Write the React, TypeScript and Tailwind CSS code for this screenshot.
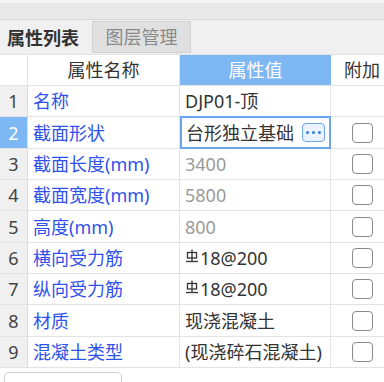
import React from "react";

type Row = {
  n: number;
  name: string;
  value: string;
  gray?: boolean;
  rebar?: boolean;
  check: boolean;
  h: string;
  selected?: boolean;
};

const rows: Row[] = [
  { n: 1, name: "名称", value: "DJP01-顶", check: false, h: "h-[31px]" },
  { n: 2, name: "截面形状", value: "台形独立基础", check: true, h: "h-[32px]", selected: true },
  { n: 3, name: "截面长度(mm)", value: "3400", gray: true, check: true, h: "h-[31px]" },
  { n: 4, name: "截面宽度(mm)", value: "5800", gray: true, check: true, h: "h-[31px]" },
  { n: 5, name: "高度(mm)", value: "800", gray: true, check: true, h: "h-[32px]" },
  { n: 6, name: "横向受力筋", value: "18@200", rebar: true, check: true, h: "h-[31px]" },
  { n: 7, name: "纵向受力筋", value: "18@200", rebar: true, check: true, h: "h-[31px]" },
  { n: 8, name: "材质", value: "现浇混凝土", check: true, h: "h-[32px]" },
  { n: 9, name: "混凝土类型", value: "(现浇碎石混凝土)", check: true, h: "h-[31px]" },
];

function RebarSymbol() {
  return (
    <svg width="14" height="15" viewBox="0 0 14 15" className="mr-[1px] -mt-[3px]">
      <rect x="2.5" y="3.5" width="9" height="5.5" fill="none" stroke="#333" strokeWidth="1.3" />
      <line x1="7" y1="0.5" x2="7" y2="12.5" stroke="#333" strokeWidth="1.3" />
      <line x1="1" y1="12.5" x2="13" y2="12.5" stroke="#333" strokeWidth="1.3" />
    </svg>
  );
}

function Checkbox() {
  return <div className="w-[21px] h-[20px] rounded-[4px] border-[1.5px] border-[#8a8a8a] bg-white" />;
}

export default function App() {
  return (
    <div
      className="w-[384px] h-[382px] overflow-hidden bg-white flex flex-col text-[18px] text-[#333]"
      style={{ fontFamily: '"Noto Sans", "Noto Sans CJK SC", sans-serif' }}
    >
      {/* top strip */}
      <div className="h-[20px] shrink-0 bg-[#e9e9e9] border-t-[3px] border-t-[#f5f5f5] border-b border-b-[#d8d8d8]" />
      {/* tabs */}
      <div className="h-[35px] shrink-0 bg-[#f0f0f0] flex items-end border-b border-b-[#e2e2e2]">
        <div className="w-[92px] h-[33px] flex items-center pl-[7px] font-bold text-[#333] leading-none">
          属性列表
        </div>
        <div className="w-[99px] h-[32px] mb-[1px] bg-[#e0e0e0] border border-[#d2d2d2] flex items-center justify-center text-[#8a8a8a] leading-none">
          图层管理
        </div>
      </div>
      {/* table */}
      <div className="w-[393px] shrink-0 flex flex-col">
        {/* header */}
        <div className="grid grid-cols-[28px_152px_151px_62px] h-[31px] border-b border-[#e3e3e3]">
          <div className="border-r border-[#e3e3e3] bg-white" />
          <div className="border-r border-[#e3e3e3] flex items-center justify-center leading-none">属性名称</div>
          <div className="bg-[#7db7f4] text-white flex items-center justify-center leading-none">属性值</div>
          <div className="flex items-center justify-center leading-none">附加</div>
        </div>
        {rows.map((r) => (
          <div
            key={r.n}
            className={`grid grid-cols-[28px_152px_151px_62px] ${r.h} border-b border-[#e3e3e3]`}
          >
            <div
              className={`border-r border-[#dcdcdc] flex items-center justify-center leading-none ${
                r.selected ? "bg-[#7db7f4] text-white" : "bg-[#f0f0f0] text-[#444]"
              }`}
            >
              {r.n}
            </div>
            <div className="border-r border-[#e3e3e3] flex items-center pl-[5px] text-[#2f52ea] leading-none whitespace-nowrap">
              {r.name}
            </div>
            {r.selected ? (
              <div className="-mt-[1px] -mb-[1px] border-2 border-[#6aa6ec] flex items-center pl-[4px] pr-[4px] leading-none whitespace-nowrap">
                <span className="flex-1">{r.value}</span>
                <div className="w-[23px] h-[19px] rounded-[4px] border-[1.5px] border-[#6aa6ec] bg-[#e9f2fd] flex items-center justify-center gap-[3px]">
                  <span className="w-[3px] h-[3px] rounded-full bg-[#2f7be0]" />
                  <span className="w-[3px] h-[3px] rounded-full bg-[#2f7be0]" />
                  <span className="w-[3px] h-[3px] rounded-full bg-[#2f7be0]" />
                </div>
              </div>
            ) : (
              <div
                className={`border-r border-[#e3e3e3] flex items-center pl-[5px] leading-none whitespace-nowrap ${
                  r.gray ? "text-[#9a9a9a]" : "text-[#333]"
                }`}
              >
                {r.rebar && <RebarSymbol />}
                {r.value}
              </div>
            )}
            <div className="flex items-center justify-center">{r.check && <Checkbox />}</div>
          </div>
        ))}
      </div>
      {/* bottom */}
      <div className="flex-1 bg-white pt-[4px] pl-[4px]">
        <div className="w-[118px] h-[30px] rounded-[5px] border border-[#cfcfcf] bg-white" />
      </div>
    </div>
  );
}
